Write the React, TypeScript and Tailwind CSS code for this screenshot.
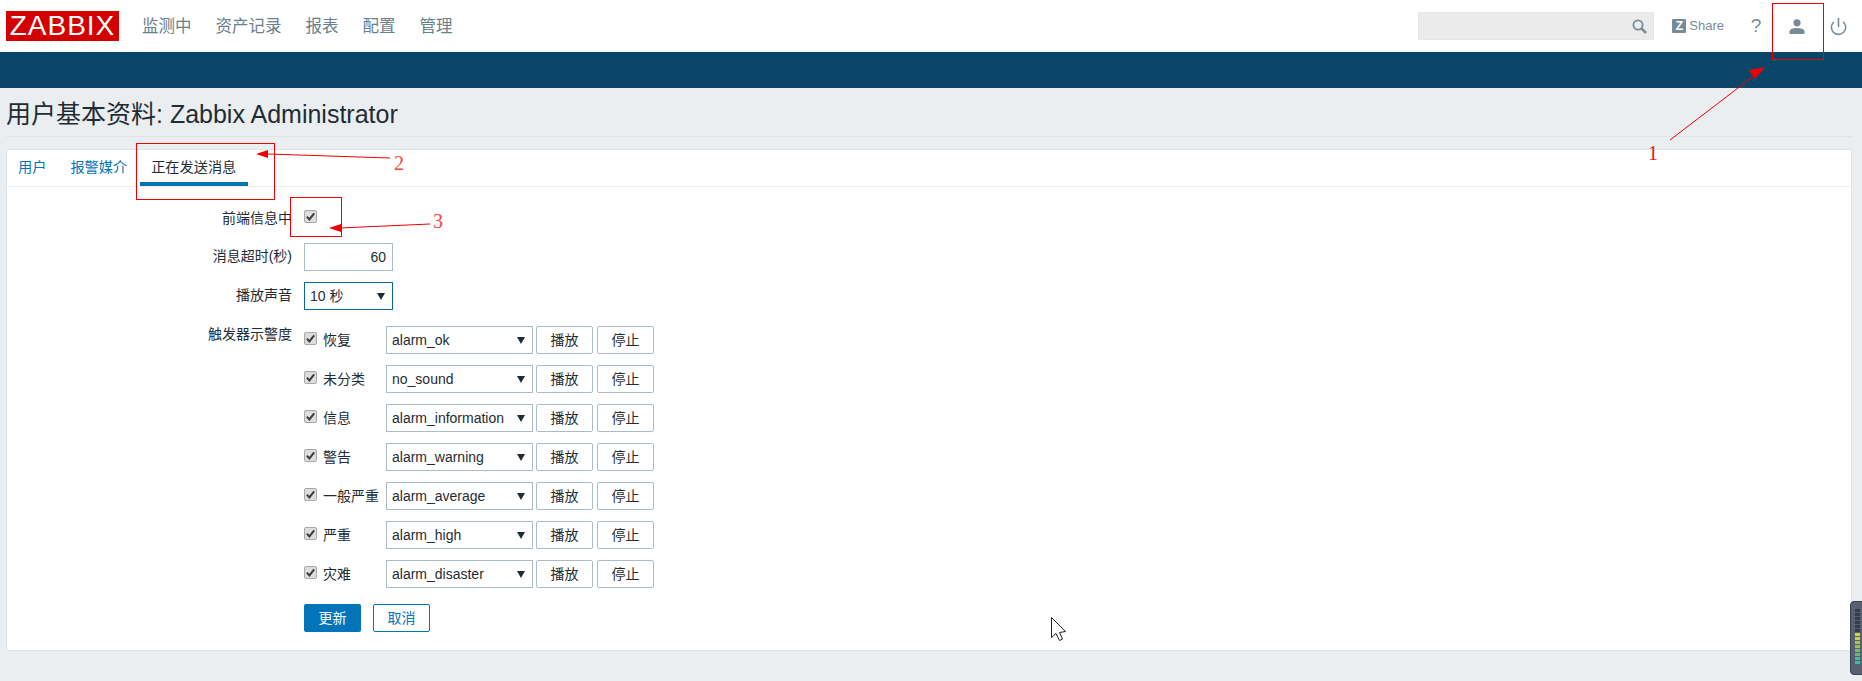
import React from "react";
import { Power } from "lucide-react";

const FONT = "[font-family:'Liberation_Sans','Noto_Sans_CJK_SC',sans-serif]";

const navItems = ["监测中", "资产记录", "报表", "配置", "管理"];

const severities = [
    { name: "恢复", sound: "alarm_ok" },
    { name: "未分类", sound: "no_sound" },
    { name: "信息", sound: "alarm_information" },
    { name: "警告", sound: "alarm_warning" },
    { name: "一般严重", sound: "alarm_average" },
    { name: "严重", sound: "alarm_high" },
    { name: "灾难", sound: "alarm_disaster" },
];

function Check() {
    return (
        <span className="flex h-[13px] w-[13px] shrink-0 items-center justify-center rounded-[2px] border border-[#a8a8a8] bg-[#dddddd]">
            <svg viewBox="0 0 12 12" className="h-[11px] w-[11px]">
                <path d="M2 6.2 L4.8 9.2 L10 2.6" fill="none" stroke="#3c3c3c" strokeWidth="2.2" />
            </svg>
        </span>
    );
}

function Select({ value, width, active }: { value: string; width: string; active?: boolean }) {
    return (
        <div className={`flex h-7 items-center justify-between border pl-[5px] pr-[7px] ${width} ${active ? "border-[#0a6a9c]" : "border-[#acbbc7]"}`}>
            <span>{value}</span>
            <svg viewBox="0 0 8 7" className="h-[7px] w-[8px]">
                <polygon points="0,0 8,0 4,7" fill="#1f2c33" />
            </svg>
        </div>
    );
}

function SmallButton({ label }: { label: string }) {
    return (
        <div className="flex h-7 w-[57px] items-center justify-center rounded-[2px] border border-[#acbbc7]">{label}</div>
    );
}

// red boxes, arrows and numbers drawn on top of the screenshot
function Annotations() {
    return (
        <>
            <svg className="pointer-events-none absolute left-0 top-0" width="1862" height="681">
                <g fill="none" stroke="#f00000" strokeWidth="1">
                    <rect x="1772.5" y="3.5" width="51" height="56" />
                    <rect x="136.5" y="143.5" width="138" height="56" />
                    <rect x="290.5" y="197.5" width="51" height="39" />
                    <line x1="1670" y1="140" x2="1755" y2="75" />
                    <line x1="390" y1="158" x2="268" y2="154" />
                    <line x1="430" y1="224" x2="340" y2="228" />
                </g>
                <g fill="#f00000">
                    <polygon points="1765,67 1749,70 1755,79" />
                    <polygon points="256,154 268,150 268,158" />
                    <polygon points="329,228 341,224 341,232" />
                </g>
                {/* mouse pointer */}
                <path d="M1051.5 617.5 V637.5 L1056 633.5 L1059.5 640.5 L1062.5 639 L1059.5 632.5 L1065.5 631.5 Z" fill="#fff" stroke="#222" strokeWidth="1" />
            </svg>
            <span className="absolute left-[1648px] top-[142px] font-['Liberation_Serif',serif] text-[20px] leading-[22px] text-[#f01010]">1</span>
            <span className="absolute left-[394px] top-[152px] font-['Liberation_Serif',serif] text-[20px] leading-[22px] text-[#ff4040]">2</span>
            <span className="absolute left-[433px] top-[210px] font-['Liberation_Serif',serif] text-[20px] leading-[22px] text-[#ff4040]">3</span>
        </>
    );
}

// little level meter widget stuck on the right edge
function Meter() {
    const bars = ["#343c4a", "#343c4a", "#343c4a", "#343c4a", "#343c4a", "#343c4a", "#d4d43c", "#c4cc48", "#a8c450", "#98c058", "#7cbc68", "#64b878", "#48b890", "#34bca8"];
    return (
        <div className="absolute left-[1850px] top-[601px] flex h-[74px] w-[14px] flex-col items-start gap-[1px] rounded-l-[4px] border border-[#3a4250] bg-[#566070] pl-[4px] pt-[7px]">
            {bars.map((c, i) => (
                <span key={i} className="h-[3px] w-[5px] shrink-0" style={{ backgroundColor: c }} />
            ))}
        </div>
    );
}

export default function App() {
    return (
        <div className={`relative h-[681px] w-[1862px] overflow-hidden bg-[#ebeef0] text-[14px] leading-5 text-[#1f2c33] ${FONT}`}>
            <header className="flex h-[52px] items-center bg-white">
                <div className="ml-[6px] flex h-[30px] w-[113px] items-center justify-center bg-[#d40000] text-[28px] leading-none tracking-[1px] text-white">ZABBIX</div>
                <nav className="ml-[23px] flex gap-[24px] text-[16.5px] text-[#69808d]">
                    {navItems.map((item) => (
                        <span key={item}>{item}</span>
                    ))}
                </nav>
                <div className="ml-auto flex items-center">
                    <div className="flex h-7 w-[236px] items-center justify-end border border-[#e6e6e6] bg-[#ebebeb] pr-[6px]">
                        <svg viewBox="0 0 15 15" className="h-[15px] w-[15px]">
                            <circle cx="6" cy="6" r="4.6" fill="none" stroke="#768d99" strokeWidth="1.8" />
                            <line x1="9.4" y1="9.4" x2="14" y2="14" stroke="#768d99" strokeWidth="2.6" />
                        </svg>
                    </div>
                    <div className="ml-[18px] flex items-center text-[13px] text-[#768d99]">
                        <span className="flex h-[14px] w-[14px] items-center justify-center rounded-[1px] bg-[#768d99] text-[12px] font-bold leading-none text-white">Z</span>
                        <span className="ml-[3px]">Share</span>
                    </div>
                    <span className="ml-[25px] w-[14px] text-center text-[19px] text-[#768d99]">?</span>
                    <svg viewBox="0 0 16 15" className="ml-[26px] h-[15px] w-[16px]">
                        <circle cx="8" cy="3.8" r="3.6" fill="#768d99" />
                        <path d="M0.5 15 V12.5 C0.5 10 4.5 9 8 9 C11.5 9 15.5 10 15.5 12.5 V15 Z" fill="#768d99" />
                    </svg>
                    <Power size={19} strokeWidth={2} className="ml-[24px] mr-[14px] text-[#768d99]" />
                </div>
            </header>
            <div className="h-9 bg-[#0a466a]" />
            <main className="pl-[6px] pr-[10px]">
                <h1 className="flex h-[49px] items-center border-b border-[#dfe4e7] pt-[4px] text-[25px] font-normal text-[#1f2c33]">
                    用户基本资料: Zabbix Administrator
                </h1>
                <section className="mt-3 h-[502px] border border-[#dfe4e7] bg-white">
                    <div className="flex h-[37px] border-b border-[#ebeef0] pb-[3px]">
                        <span className="ml-[11px] flex items-center text-[14.2px] text-[#0275b8]">用户</span>
                        <span className="ml-[24px] flex items-center text-[14.2px] text-[#0275b8]">报警媒介</span>
                        <span className="relative ml-[24px] flex items-center text-[14.2px] text-[#1f2c33]">
                            正在发送消息
                            <span className="absolute -left-[11px] -right-[12px] -bottom-[3px] h-1 bg-[#0275b8]" />
                        </span>
                    </div>
                    <div className="pt-[20px]">
                        <div className="flex h-[36px]">
                            <label className="w-[285px] text-right leading-[22px]">前端信息中</label>
                            <div className="ml-3 pt-[3px]"><Check /></div>
                        </div>
                        <div className="flex h-[39px]">
                            <label className="w-[285px] text-right leading-[26px]">消息超时(秒)</label>
                            <div className="ml-3 flex h-7 w-[89px] items-center justify-end border border-[#acbbc7] pr-[6px]">60</div>
                        </div>
                        <div className="flex h-[44px]">
                            <label className="w-[285px] text-right leading-[26px]">播放声音</label>
                            <div className="ml-3"><Select value="10 秒" width="w-[89px]" active /></div>
                        </div>
                        <div className="flex">
                            <label className="w-[285px] text-right leading-[16px]">触发器示警度</label>
                            <div className="ml-3 flex flex-col gap-[11px]">
                                {severities.map((s) => (
                                    <div key={s.name} className="flex h-7 items-center">
                                        <div className="mb-[3px]"><Check /></div>
                                        <span className="ml-[6px] w-[63px] whitespace-nowrap">{s.name}</span>
                                        <Select value={s.sound} width="w-[147px]" />
                                        <div className="ml-[3px] flex gap-[4px]">
                                            <SmallButton label="播放" />
                                            <SmallButton label="停止" />
                                        </div>
                                    </div>
                                ))}
                                <div className="mt-[5px] flex gap-3">
                                    <div className="flex h-7 w-[57px] items-center justify-center rounded-[2px] bg-[#0275b8] text-white">更新</div>
                                    <div className="flex h-7 w-[57px] items-center justify-center rounded-[2px] border border-[#0275b8] text-[#0275b8]">取消</div>
                                </div>
                            </div>
                        </div>
                    </div>
                </section>
            </main>
            <Annotations />
            <Meter />
        </div>
    );
}
